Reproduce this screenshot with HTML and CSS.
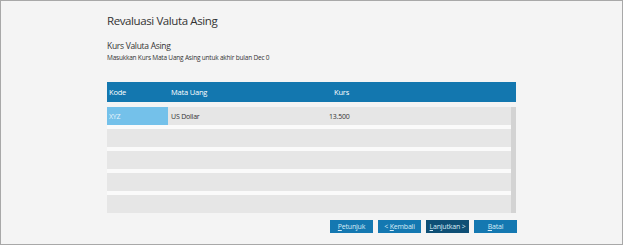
FILE: index.html
```html
<!DOCTYPE html>
<html lang="id">

<head>
  <meta charset="UTF-8">
  <meta name="viewport" content="width=device-width, initial-scale=1.0">
  <title>Revaluasi Valuta Asing</title>
  <link rel="stylesheet" href="styles.css">
</head>

<body>
  <div class="window">
    <div class="content">
      <h1 class="title">Revaluasi Valuta Asing</h1>
      <h2 class="subtitle">Kurs Valuta Asing</h2>
      <p class="hint">Masukkan Kurs Mata Uang Asing untuk akhir bulan Dec 0</p>

      <div class="grid">
        <div class="grid-head">
          <span class="col-kode">Kode</span>
          <span class="col-mata">Mata Uang</span>
          <span class="col-kurs">Kurs</span>
        </div>
        <div class="grid-body">
          <div class="rows">
            <div class="row">
              <span class="col-kode selected">XYZ</span>
              <span class="col-mata">US Dollar</span>
              <span class="col-kurs value">13.500</span>
            </div>
            <div class="row"></div>
            <div class="row"></div>
            <div class="row"></div>
            <div class="row"></div>
          </div>
          <div class="scrollbar"></div>
        </div>
      </div>

      <div class="buttons">
        <button class="btn"><u>P</u>etunjuk</button>
        <button class="btn">&lt; <u>K</u>embali</button>
        <button class="btn primary"><u>L</u>anjutkan &gt;</button>
        <button class="btn"><u>B</u>atal</button>
      </div>
    </div>
  </div>
</body>

</html>
```

FILE: styles.css
```css
body {
  margin: 0;
  font-family: "Open Sans", "Noto Sans", sans-serif;
  background-color: #ffffff;
  color: #333333;
}

.window {
  width: 621px;
  height: 243px;
  border: 1px solid #a8a8a8;
  background-color: #f4f4f4;
  overflow: hidden;
}

.content {
  width: 410px;
  padding: 11px 0 0 106px;
}

.title {
  margin: 0;
  font-size: 11.5px;
  font-weight: normal;
  letter-spacing: -0.4px;
  color: #333333;
  line-height: 17px;
}

.subtitle {
  margin: 10px 0 0 0;
  font-size: 8.5px;
  font-weight: normal;
  letter-spacing: -0.3px;
  color: #333333;
  line-height: 13px;
}

.hint {
  margin: 1px 0 0 0;
  font-size: 6.5px;
  letter-spacing: -0.2px;
  line-height: 9px;
  color: #333333;
}

.grid {
  margin-top: 20px;
  width: 409px;
}

.grid-head {
  display: flex;
  height: 20px;
  align-items: center;
  background-color: #1377af;
  color: #ffffff;
  font-size: 7.5px;
  letter-spacing: -0.2px;
}

.col-kode {
  width: 61px;
  padding-left: 2px;
  box-sizing: border-box;
}

.col-mata {
  width: 159px;
  padding-left: 3px;
  box-sizing: border-box;
}

.col-kurs {
  padding-left: 7px;
}

.col-kurs.value {
  padding-left: 2px;
}

.grid-body {
  display: flex;
  margin-top: 5px;
  background-color: #fafafa;
}

.rows {
  flex: 1;
}

.row {
  display: flex;
  align-items: center;
  height: 18px;
  margin-bottom: 4px;
  background-color: #e6e6e6;
  font-size: 7px;
  letter-spacing: -0.2px;
  color: #333333;
}

.row:last-child {
  margin-bottom: 0;
}

.row .col-kode {
  align-self: stretch;
  display: flex;
  align-items: center;
}

.selected {
  background-color: #74c1ea;
  color: #e8f4fb;
}

.scrollbar {
  width: 5px;
  background-color: #d3d3d3;
}

.buttons {
  display: flex;
  justify-content: flex-end;
  gap: 5px;
  margin-top: 7px;
  width: 410px;
}

.btn {
  width: 43px;
  height: 13px;
  padding: 0;
  border: none;
  background-color: #1478b1;
  color: #d9ecf7;
  font-family: inherit;
  font-size: 7px;
  letter-spacing: -0.2px;
}

.btn.primary {
  background-color: #0e4f75;
}
```
